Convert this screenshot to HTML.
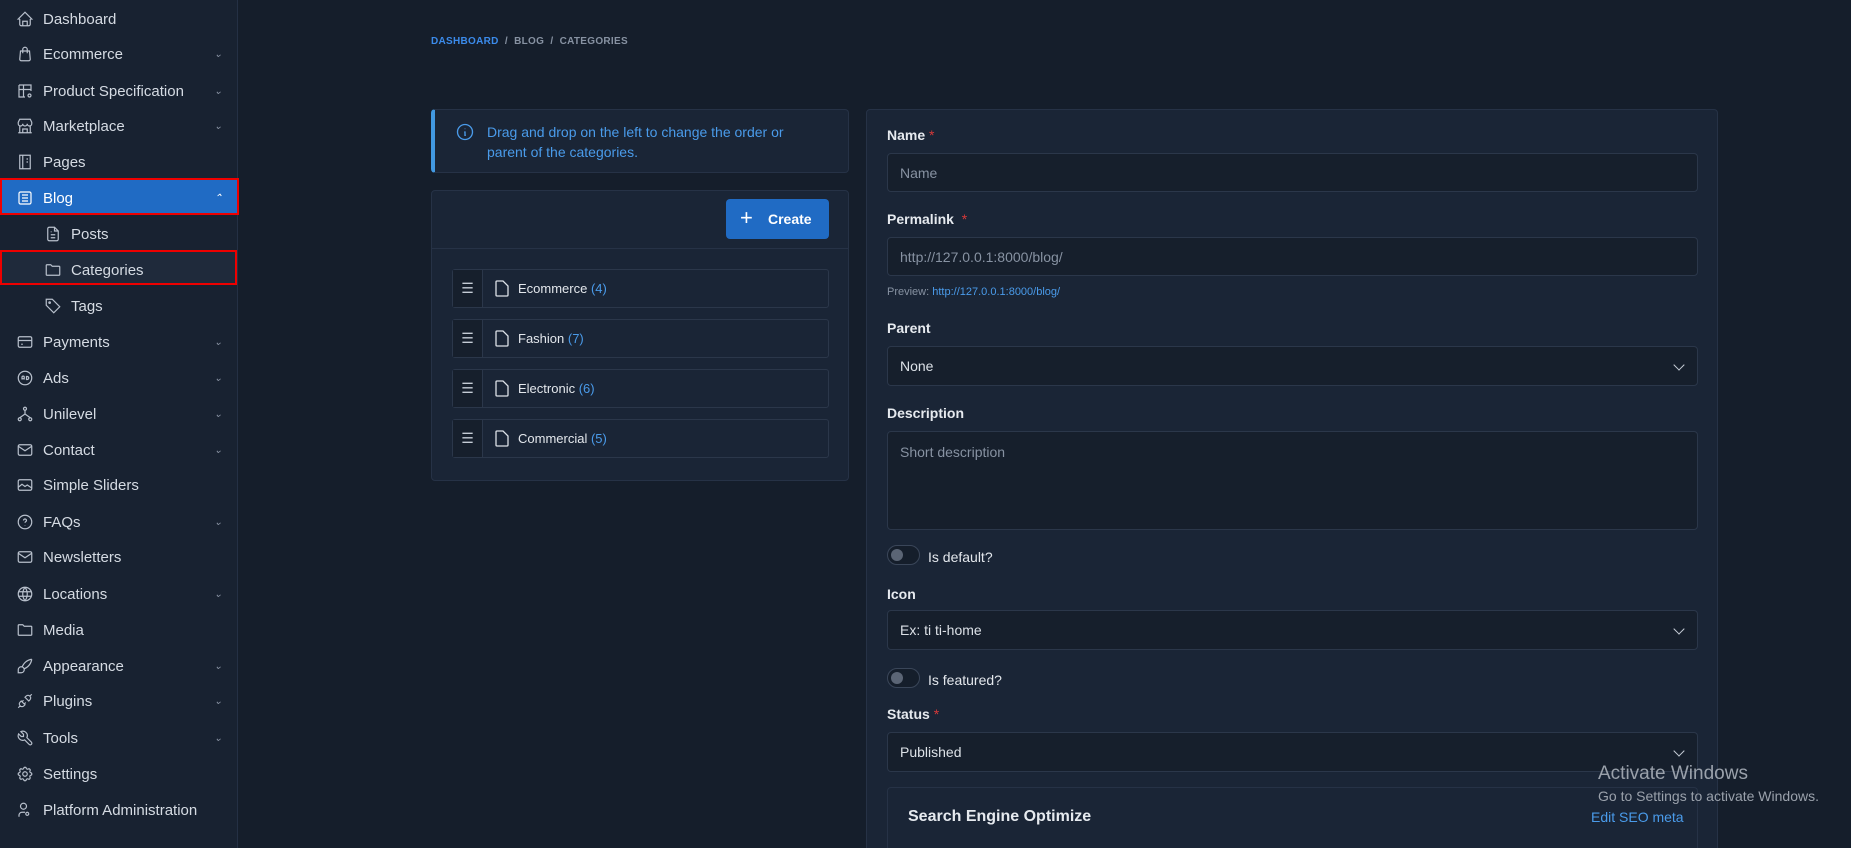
<!DOCTYPE html>
<html style="overflow:hidden;width:1851px;height:848px"><head><meta charset="utf-8"><style>
*{box-sizing:border-box;margin:0;padding:0}
body{width:1851px;height:848px;overflow:hidden;background:#151e2b;font-family:"Liberation Sans",sans-serif;color:#dce1e7;position:relative}
.sb{position:absolute;left:0;top:0;width:238px;height:848px;background:#182231;border-right:1px solid #243044}
.mi{position:absolute;left:0;width:238px;height:36px;display:flex;align-items:center;font-size:15px;color:#d5dbe3}
.mi svg{position:absolute;left:16px;width:18px;height:18px;fill:none;stroke:#b8c0cc;stroke-width:1.6}
.mi span{position:absolute;left:43px}
.mi.sub svg{left:44px}.mi.sub span{left:71px}
.mi .ch{position:absolute;left:214px;font-size:10px;color:#8a94a3}
.abs{position:absolute}
.card{position:absolute;background:#1a2536;border:1px solid #263246;border-radius:4px}
.lbl{position:absolute;left:887px;font-size:14px;font-weight:bold;color:#e6eaef}
.lbl b{color:#d63939;font-weight:normal}
.inp{position:absolute;left:887px;width:811px;border:1px solid #2b374a;border-radius:4px;background:#161f2c;font-size:14px;color:#8792a2;padding-left:12px;display:flex;align-items:center}
.inp.sel{color:#dce1e7}
.caret{position:absolute;right:14px;top:50%;margin-top:-5px;width:8px;height:8px;border-right:1.6px solid #c5ccd6;border-bottom:1.6px solid #c5ccd6;transform:rotate(45deg)}
.row{position:absolute;left:452px;width:377px;height:39px;border:1px solid #2b374a;border-radius:3px;background:#1a2536}
.row .h{position:absolute;left:0;top:0;width:30px;height:37px;border-right:1px solid #2b374a;background:#161f2c;color:#c5ccd6;font-size:14px;text-align:center;line-height:37px}
.row .t{position:absolute;left:65px;top:11px;font-size:13px;color:#e3e7ec}
.row .t i{font-style:normal;color:#4a9bea}
.row svg{position:absolute;left:42px;top:10px}
.tog{position:absolute;left:887px;width:33px;height:20px;border:1px solid #3a4659;border-radius:10px;background:#151e2b}
.tog:after{content:"";position:absolute;left:3px;top:3px;width:12px;height:12px;border-radius:50%;background:#5b6575}
.tl{position:absolute;left:928px;font-size:14px;color:#e3e7ec}
</style></head><body>
<div class="sb">
<div class="mi" style="top:1px"><svg viewBox="0 0 24 24"><path d="M5 12H3l9-9 9 9h-2M5 12v7a2 2 0 002 2h10a2 2 0 002-2v-7M9 21v-6h6v6"/></svg><span>Dashboard</span></div>
<div class="mi" style="top:36px"><svg viewBox="0 0 24 24"><path d="M6 8h12l1 11a2 2 0 01-2 2H7a2 2 0 01-2-2zM9 11V6a3 3 0 016 0v5"/></svg><span>Ecommerce</span><em class="ch">⌄</em></div>
<div class="mi" style="top:73px"><svg viewBox="0 0 24 24"><path d="M4 4h16v8M4 4v16h8M4 10h16M10 4v16"/><circle cx="18" cy="18" r="2"/></svg><span>Product Specification</span><em class="ch">⌄</em></div>
<div class="mi" style="top:108px"><svg viewBox="0 0 24 24"><path d="M3 21h18M3 7l2-4h14l2 4v2a3 3 0 01-6 0 3 3 0 01-6 0 3 3 0 01-6 0zM5 21V11M19 21V11M9 21v-5h6v5"/></svg><span>Marketplace</span><em class="ch">⌄</em></div>
<div class="mi" style="top:144px"><svg viewBox="0 0 24 24"><path d="M5 3h14v18H5zM9 3v18M14 8h2M14 12h2"/></svg><span>Pages</span></div>
<div class="abs" style="left:0;top:178px;width:239px;height:37px;background:#206bc4;border:2px solid #e00;"></div>
<div class="mi" style="top:180px;color:#fff"><svg viewBox="0 0 24 24" style="stroke:#fff"><rect x="4" y="4" width="16" height="16" rx="2"/><path d="M8 8h8M8 12h8M8 16h8"/></svg><span>Blog</span><em class="ch" style="color:#fff">⌃</em></div>
<div class="mi sub" style="top:216px"><svg viewBox="0 0 24 24"><path d="M14 3H7a2 2 0 00-2 2v14a2 2 0 002 2h10a2 2 0 002-2V8zM14 3v5h5M9 13h6M9 17h6M9 9h1"/></svg><span>Posts</span></div>
<div class="abs" style="left:0;top:250px;width:237px;height:35px;background:#1f2a3b;border:2px solid #e00;"></div>
<div class="mi sub" style="top:252px"><svg viewBox="0 0 24 24"><path d="M3 6a1 1 0 011-1h5l2 2h9a1 1 0 011 1v10a1 1 0 01-1 1H4a1 1 0 01-1-1z"/></svg><span>Categories</span></div>
<div class="mi sub" style="top:288px"><svg viewBox="0 0 24 24"><path d="M3 3h8l10 10-8 8L3 11z"/><circle cx="7.5" cy="7.5" r="1"/></svg><span>Tags</span></div>
<div class="mi" style="top:324px"><svg viewBox="0 0 24 24"><rect x="3" y="5" width="18" height="14" rx="2"/><path d="M3 10h18M7 15h2"/></svg><span>Payments</span><em class="ch">⌄</em></div>
<div class="mi" style="top:360px"><svg viewBox="0 0 24 24"><circle cx="12" cy="12" r="9"/><path d="M8 14v-3a1 1 0 013 0v3M8 13h3M14 10v4h1a2 2 0 000-4z"/></svg><span>Ads</span><em class="ch">⌄</em></div>
<div class="mi" style="top:396px"><svg viewBox="0 0 24 24"><circle cx="12" cy="5" r="2"/><circle cx="5" cy="19" r="2"/><circle cx="19" cy="19" r="2"/><path d="M12 7v5M5 17l7-5 7 5"/></svg><span>Unilevel</span><em class="ch">⌄</em></div>
<div class="mi" style="top:432px"><svg viewBox="0 0 24 24"><rect x="3" y="5" width="18" height="14" rx="2"/><path d="M3 7l9 6 9-6"/></svg><span>Contact</span><em class="ch">⌄</em></div>
<div class="mi" style="top:467px"><svg viewBox="0 0 24 24"><rect x="3" y="5" width="18" height="14" rx="2"/><path d="M3 15l5-4 4 3 3-2 6 4"/></svg><span>Simple Sliders</span></div>
<div class="mi" style="top:504px"><svg viewBox="0 0 24 24"><circle cx="12" cy="12" r="9"/><path d="M10 10a2 2 0 114 0c0 1.5-2 1.5-2 3M12 16v.5"/></svg><span>FAQs</span><em class="ch">⌄</em></div>
<div class="mi" style="top:539px"><svg viewBox="0 0 24 24"><rect x="3" y="5" width="18" height="14" rx="2"/><path d="M3 7l9 6 9-6"/></svg><span>Newsletters</span></div>
<div class="mi" style="top:576px"><svg viewBox="0 0 24 24"><circle cx="12" cy="12" r="9"/><path d="M3.6 9h16.8M3.6 15h16.8M12 3a15 15 0 010 18M12 3a15 15 0 000 18"/></svg><span>Locations</span><em class="ch">⌄</em></div>
<div class="mi" style="top:612px"><svg viewBox="0 0 24 24"><path d="M3 6a1 1 0 011-1h5l2 2h9a1 1 0 011 1v10a1 1 0 01-1 1H4a1 1 0 01-1-1z"/></svg><span>Media</span></div>
<div class="mi" style="top:648px"><svg viewBox="0 0 24 24"><path d="M3 21v-4a4 4 0 114 4zM21 3A16 16 0 008 14M21 3a16 16 0 01-11 13"/></svg><span>Appearance</span><em class="ch">⌄</em></div>
<div class="mi" style="top:683px"><svg viewBox="0 0 24 24"><path d="M7 12l5 5-1.5 1.5a3.5 3.5 0 01-5-5zM17 12l-5-5 1.5-1.5a3.5 3.5 0 015 5zM3 21l2.5-2.5M18.5 5.5L21 3M10 11l-2 2M13 14l-2 2"/></svg><span>Plugins</span><em class="ch">⌄</em></div>
<div class="mi" style="top:720px"><svg viewBox="0 0 24 24"><path d="M7 10h3V7L6.5 3.5a6 6 0 018 8l6 6a2 2 0 01-3 3l-6-6a6 6 0 01-8-8z"/></svg><span>Tools</span><em class="ch">⌄</em></div>
<div class="mi" style="top:756px"><svg viewBox="0 0 24 24"><circle cx="12" cy="12" r="3"/><path d="M10.3 4.3c.4-1.8 3-1.8 3.4 0a1.7 1.7 0 002.6 1c1.5-.9 3.3.8 2.4 2.4a1.7 1.7 0 001 2.6c1.8.4 1.8 3 0 3.4a1.7 1.7 0 00-1 2.6c.9 1.5-.8 3.300-2.4 2.4a1.7 1.7 0 00-2.6 1c-.4 1.8-3 1.8-3.4 0a1.7 1.7 0 00-2.6-1c-1.5.9-3.3-.8-2.4-2.4a1.7 1.7 0 00-1-2.6c-1.8-.4-1.8-3 0-3.4a1.7 1.7 0 001-2.6c-.9-1.5.8-3.3 2.4-2.4a1.7 1.7 0 002.6-1z"/></svg><span>Settings</span></div>
<div class="mi" style="top:792px"><svg viewBox="0 0 24 24"><circle cx="10" cy="7" r="4"/><path d="M4 21v-2a4 4 0 014-4h4M17 17a2 2 0 100 .1"/></svg><span>Platform Administration</span></div>
</div>

<div class="abs" style="left:431px;top:36px;font-size:10px;font-weight:bold;letter-spacing:.3px;color:#8792a2"><span style="color:#3b8beb">DASHBOARD</span> &nbsp;/&nbsp; BLOG &nbsp;/&nbsp; CATEGORIES</div>

<div class="card" style="left:431px;top:109px;width:418px;height:64px;border-left:4px solid #4299e1">
<svg class="abs" style="left:20px;top:12px" width="20" height="20" viewBox="0 0 24 24" fill="none" stroke="#4a9bea" stroke-width="1.6"><circle cx="12" cy="12" r="9"/><path d="M12 8v.5M11 12h1v4h1"/></svg>
<div class="abs" style="left:52px;top:12px;font-size:14px;line-height:20px;color:#4a9bea">Drag and drop on the left to change the order or<br>parent of the categories.</div>
</div>

<div class="card" style="left:431px;top:190px;width:418px;height:291px">
<div class="abs" style="left:0;top:57px;width:416px;height:1px;background:#263246"></div>
<div class="abs" style="left:294px;top:8px;width:103px;height:40px;background:#206bc4;border-radius:4px;color:#fff;font-size:14px;font-weight:bold;line-height:40px;padding-left:42px"><span class="abs" style="left:14px;top:-1px;font-size:22px;font-weight:normal">+</span>Create</div>
</div>
<div class="row" style="top:269px"><div class="h">☰</div><svg width="14" height="17" viewBox="0 0 14 17" fill="none" stroke="#dce1e7" stroke-width="1.3"><path d="M1 2a1 1 0 011-1h6l5 5v9a1 1 0 01-1 1H2a1 1 0 01-1-1z"/></svg><div class="t">Ecommerce <i>(4)</i></div></div>
<div class="row" style="top:319px"><div class="h">☰</div><svg width="14" height="17" viewBox="0 0 14 17" fill="none" stroke="#dce1e7" stroke-width="1.3"><path d="M1 2a1 1 0 011-1h6l5 5v9a1 1 0 01-1 1H2a1 1 0 01-1-1z"/></svg><div class="t">Fashion <i>(7)</i></div></div>
<div class="row" style="top:369px"><div class="h">☰</div><svg width="14" height="17" viewBox="0 0 14 17" fill="none" stroke="#dce1e7" stroke-width="1.3"><path d="M1 2a1 1 0 011-1h6l5 5v9a1 1 0 01-1 1H2a1 1 0 01-1-1z"/></svg><div class="t">Electronic <i>(6)</i></div></div>
<div class="row" style="top:419px"><div class="h">☰</div><svg width="14" height="17" viewBox="0 0 14 17" fill="none" stroke="#dce1e7" stroke-width="1.3"><path d="M1 2a1 1 0 011-1h6l5 5v9a1 1 0 01-1 1H2a1 1 0 01-1-1z"/></svg><div class="t">Commercial <i>(5)</i></div></div>

<div class="card" style="left:866px;top:109px;width:852px;height:745px"></div>
<div class="lbl" style="top:127px">Name <b>*</b></div>
<div class="inp" style="top:153px;height:39px">Name</div>
<div class="lbl" style="top:211px">Permalink &nbsp;<b>*</b></div>
<div class="inp" style="top:237px;height:39px">http://127.0.0.1:8000/blog/</div>
<div class="abs" style="left:887px;top:286px;font-size:11px;color:#8792a2">Preview: <span style="color:#4a9bea">http://127.0.0.1:8000/blog/</span></div>
<div class="lbl" style="top:320px">Parent</div>
<div class="inp sel" style="top:346px;height:40px">None<i class="caret"></i></div>
<div class="lbl" style="top:405px">Description</div>
<div class="inp" style="top:431px;height:99px;align-items:flex-start;padding-top:12px">Short description</div>
<div class="tog" style="top:545px"></div><div class="tl" style="top:549px">Is default?</div>
<div class="lbl" style="top:586px">Icon</div>
<div class="inp sel" style="top:610px;height:40px">Ex: ti ti-home<i class="caret"></i></div>
<div class="tog" style="top:668px"></div><div class="tl" style="top:672px">Is featured?</div>
<div class="lbl" style="top:706px">Status <b>*</b></div>
<div class="inp sel" style="top:732px;height:40px">Published<i class="caret"></i></div>
<div class="abs" style="left:887px;top:787px;width:811px;height:61px;border:1px solid #263246;border-bottom:none;border-radius:4px 4px 0 0;background:#1a2536"></div>
<div class="abs" style="left:908px;top:808px;font-size:16px;font-weight:bold;color:#e6eaef">Search Engine Optimize</div>
<div class="abs" style="left:1591px;top:809px;font-size:14px;color:#4a9bea">Edit SEO meta</div>
<div class="abs" style="left:1598px;top:763px;font-size:19px;color:#9aa1ab">Activate Windows</div>
<div class="abs" style="left:1598px;top:788px;font-size:14px;color:#9aa1ab">Go to Settings to activate Windows.</div>
</body></html>
